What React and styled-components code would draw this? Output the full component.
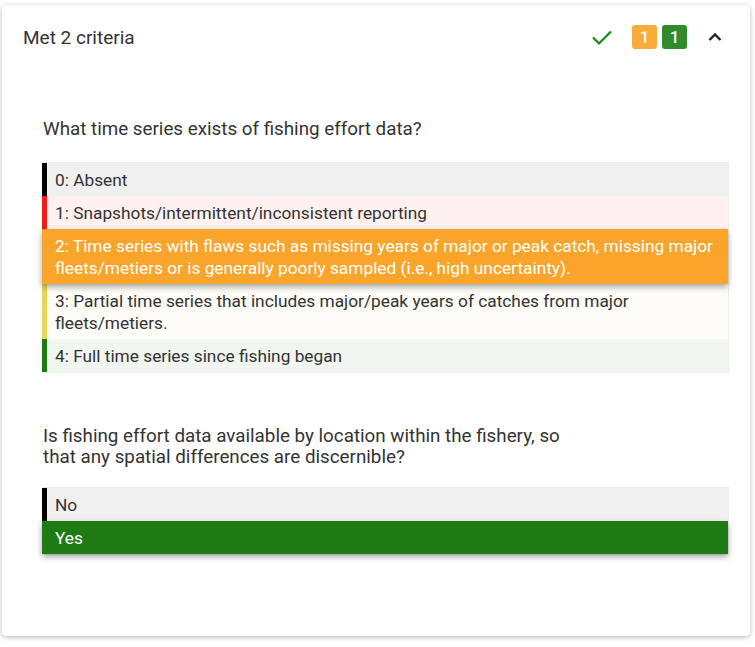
import React from 'react';
import styled, { createGlobalStyle } from 'styled-components';

const GlobalStyle = createGlobalStyle`
  body {
    margin: 0;
    background: #ffffff;
    font-family: Roboto, "Liberation Sans", sans-serif;
    color: #333;
  }
`;

const Page = styled.div`
  padding: 5px 5px 10px 2px;
`;

const Card = styled.div`
  background: #fff;
  border-radius: 4px;
  box-shadow: 0 1px 4px rgba(0, 0, 0, 0.22), 0 2px 6px rgba(0, 0, 0, 0.08);
  height: 631px;
  box-sizing: border-box;
`;

const Header = styled.div`
  display: flex;
  align-items: center;
  height: 64px;
  padding: 0 23px 0 21px;
`;

const Title = styled.div`
  flex: 1;
  font-size: 19px;
  color: #333;
`;

const Status = styled.div`
  display: flex;
  align-items: center;
`;

const Badge = styled.span`
  display: inline-flex;
  align-items: center;
  justify-content: center;
  width: 25px;
  height: 24px;
  border-radius: 3px;
  background: ${(p) => p.$color};
  color: #fff;
  font-size: 17px;
  font-weight: 500;
  margin-left: ${(p) => p.$gap}px;
`;

const Body = styled.div`
  padding: 50px 21px 0 40px;
`;

const Question = styled.div`
  font-size: 18.8px;
  line-height: 21px;
  color: #333;
  max-width: ${(p) => p.$max || 'none'};
  padding-left: 1px;
  margin-bottom: ${(p) => p.$after}px;
`;

const List = styled.div`
  border: 1px solid #ececec;
  border-left: none;
  margin-bottom: 53px;
`;

const Option = styled.div`
  position: relative;
  font-size: 17.3px;
  line-height: 22px;
  padding: 6px 12px 5px 8px;
  color: ${(p) => (p.$selected ? '#fff' : '#333')};
  background: ${(p) => (p.$selected ? p.$accent : p.$bg)};
  border-left: 5px solid ${(p) => p.$accent};
  box-shadow: ${(p) => (p.$selected ? '0 3px 6px rgba(0,0,0,0.35)' : 'none')};
  z-index: ${(p) => (p.$selected ? 1 : 0)};
`;

const time = [
  { text: '0: Absent', accent: '#000', bg: '#f0f0f0' },
  { text: '1: Snapshots/intermittent/inconsistent reporting', accent: '#f01c1c', bg: '#fff1f0' },
  {
    text: '2: Time series with flaws such as missing years of major or peak catch, missing major fleets/metiers or is generally poorly sampled (i.e., high uncertainty).',
    accent: '#f9a42a',
    bg: '#fff8ec',
    selected: true,
  },
  { text: '3: Partial time series that includes major/peak years of catches from major fleets/metiers.', accent: '#e8d65a', bg: '#fdfcf7' },
  { text: '4: Full time series since fishing began', accent: '#1e7b14', bg: '#f1f6f1' },
];

const spatial = [
  { text: 'No', accent: '#000', bg: '#f0f0f0' },
  { text: 'Yes', accent: '#1e7b14', bg: '#f1f6f1', selected: true },
];

function Options({ items }) {
  return (
    <List>
      {items.map((o, i) => (
        <Option key={i} $accent={o.accent} $bg={o.bg} $selected={o.selected}>
          {o.text}
        </Option>
      ))}
    </List>
  );
}

export default function App() {
  return (
    <Page>
      <GlobalStyle />
      <Card>
        <Header>
          <Title>Met 2 criteria</Title>
          <Status>
            <svg width="24" height="24" viewBox="0 0 24 24">
              <path d="M3 12.5l6 6L21 6.5" fill="none" stroke="#138a12" strokeWidth="2.2" />
            </svg>
            <Badge $color="#fbad3c" $gap={18}>1</Badge>
            <Badge $color="#318a2c" $gap={5}>1</Badge>
            <svg width="24" height="24" viewBox="0 0 24 24" style={{ marginLeft: 16 }}>
              <path d="M6.5 15l5.5-5.5 5.5 5.5" fill="none" stroke="#222" strokeWidth="2.4" />
            </svg>
          </Status>
        </Header>
        <Body>
          <Question $after={22}>What time series exists of fishing effort data?</Question>
          <Options items={time} />
          <Question $max="545px" $after={19}>
            Is fishing effort data available by location within the fishery, so that any spatial differences are discernible?
          </Question>
          <Options items={spatial} />
        </Body>
      </Card>
    </Page>
  );
}
